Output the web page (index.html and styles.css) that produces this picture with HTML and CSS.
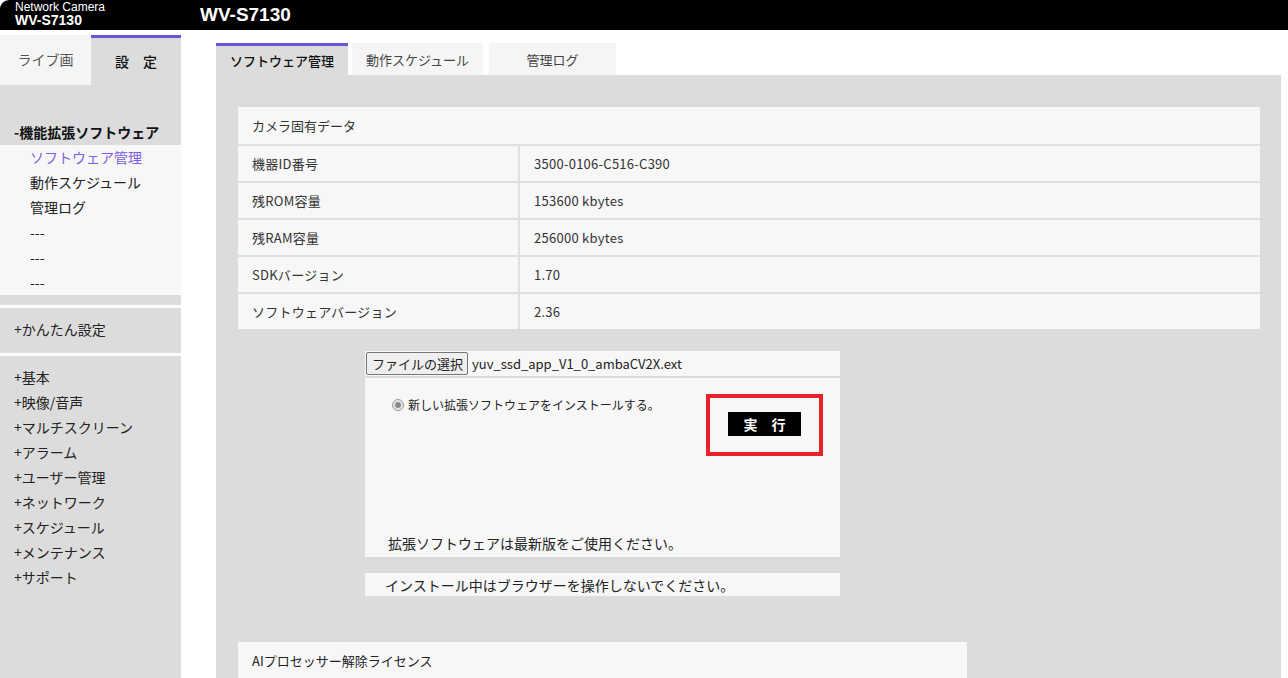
FILE: index.html
```html
<!DOCTYPE html>
<html lang="ja">
<head>
<meta charset="utf-8">
<title>WV-S7130</title>
<link rel="stylesheet" href="styles.css">
</head>
<body>
<header class="topbar">
  <div class="brand">
    <div class="brand-sub">Network Camera</div>
    <div class="brand-model">WV-S7130</div>
  </div>
  <div class="title">WV-S7130</div>
</header>
<div class="layout">
  <aside class="sidebar">
    <div class="side-tabs">
      <div class="side-tab live">ライブ画</div>
      <div class="side-tab setting">設　定</div>
    </div>
    <div class="side-block first">
      <div class="side-head">-機能拡張ソフトウェア</div>
      <ul class="sub-list">
        <li class="active">ソフトウェア管理</li>
        <li>動作スケジュール</li>
        <li>管理ログ</li>
        <li>---</li>
        <li>---</li>
        <li>---</li>
      </ul>
    </div>
    <div class="side-block second">
      <ul class="menu-list">
        <li>+かんたん設定</li>
      </ul>
    </div>
    <div class="side-block third">
      <ul class="menu-list">
        <li>+基本</li>
        <li>+映像/音声</li>
        <li>+マルチスクリーン</li>
        <li>+アラーム</li>
        <li>+ユーザー管理</li>
        <li>+ネットワーク</li>
        <li>+スケジュール</li>
        <li>+メンテナンス</li>
        <li>+サポート</li>
      </ul>
    </div>
  </aside>
  <main class="main">
    <nav class="tabs">
      <div class="tab tab-1 active">ソフトウェア管理</div>
      <div class="tab tab-2">動作スケジュール</div>
      <div class="tab tab-3">管理ログ</div>
    </nav>
    <section class="panel">
      <div class="info-table">
        <div class="cell head">カメラ固有データ</div>
        <div class="cell">機器ID番号</div><div class="cell">3500-0106-C516-C390</div>
        <div class="cell">残ROM容量</div><div class="cell">153600 kbytes</div>
        <div class="cell">残RAM容量</div><div class="cell">256000 kbytes</div>
        <div class="cell">SDKバージョン</div><div class="cell">1.70</div>
        <div class="cell">ソフトウェアバージョン</div><div class="cell">2.36</div>
      </div>
      <div class="install">
        <div class="file-row">
          <span class="file-btn">ファイルの選択</span>
          <span class="file-name">yuv_ssd_app_V1_0_ambaCV2X.ext</span>
        </div>
        <div class="install-box">
          <div class="install-top">
            <label class="radio-label"><span class="radio"></span>新しい拡張ソフトウェアをインストールする。</label>
            <div class="highlight">
              <span class="exec-btn">実　行</span>
            </div>
          </div>
          <div class="install-note">拡張ソフトウェアは最新版をご使用ください。</div>
        </div>
        <div class="warn-box">インストール中はブラウザーを操作しないでください。</div>
      </div>
      <div class="license-box">AIプロセッサー解除ライセンス</div>
    </section>
  </main>
</div>
</body>
</html>
```

FILE: styles.css
```css
html, body {
  margin: 0;
  padding: 0;
  height: 678px;
  overflow: hidden;
  background: #ffffff;
  font-family: "Noto Sans CJK JP", "Liberation Sans", sans-serif;
  color: #222;
}

.topbar {
  height: 30px;
  background: #000;
  border-top-left-radius: 9px;
  display: flex;
  align-items: center;
  color: #fff;
  font-family: "Liberation Sans", Arial, sans-serif;
}

.brand {
  width: 185px;
  padding-left: 15px;
  box-sizing: border-box;
  display: flex;
  flex-direction: column;
  margin-top: -1px;
}

.brand-sub {
  font-size: 12px;
  line-height: 12px;
}

.brand-model {
  font-size: 14px;
  font-weight: bold;
  line-height: 15px;
}

.title {
  font-size: 19px;
  font-weight: bold;
  padding-left: 15px;
  margin-top: -1px;
}

.layout {
  display: flex;
  margin-top: 5px;
  height: 643px;
}

/* Sidebar */
.sidebar {
  width: 181px;
  flex: none;
  display: flex;
  flex-direction: column;
  gap: 3px;
  font-size: 14px;
}

.side-tabs {
  display: flex;
  height: 50px;
  margin-bottom: -3px;
}

.side-tab {
  display: flex;
  align-items: center;
  justify-content: center;
  box-sizing: border-box;
}

.side-tab.live {
  width: 91px;
  background: #f5f5f5;
  color: #555;
  padding-bottom: 2px;
}

.side-tab.setting {
  width: 90px;
  background: #dcdcdc;
  border-top: 3px solid #6a55db;
  color: #111;
  font-weight: 500;
  padding-bottom: 2px;
}

.side-block {
  background: #dcdcdc;
}

.side-block.first {
  padding-top: 34px;
  padding-bottom: 10px;
}

.side-head {
  font-weight: bold;
  line-height: 26px;
  padding-left: 14px;
  color: #111;
}

.sub-list,
.menu-list {
  list-style: none;
  margin: 0;
  padding: 0;
}

.sub-list {
  background: #f7f7f7;
}

.sub-list li {
  line-height: 25px;
  padding-left: 30px;
  color: #222;
}

.sub-list li.active {
  color: #7a5fe0;
}

.menu-list li {
  line-height: 25px;
  padding-left: 14px;
  color: #222;
}

.side-block.second {
  padding: 9px 0 11px;
}

.side-block.third {
  flex: 1;
  padding-top: 9px;
}

/* Main */
.main {
  flex: 1;
  display: flex;
  flex-direction: column;
  padding: 8px 7px 0 35px;
}

.tabs {
  display: flex;
  height: 33px;
  font-size: 13px;
}

.tab {
  display: flex;
  align-items: center;
  justify-content: center;
  box-sizing: border-box;
  background: #f5f5f5;
  color: #444;
}

.tab.active {
  background: #dcdcdc;
  border-top: 3px solid #6a55db;
  color: #111;
  font-weight: 500;
  padding-bottom: 1px;
}

.tab-1 { width: 132px; }
.tab-2 { width: 131px; margin-left: 4px; }
.tab-3 { width: 127px; margin-left: 6px; }

.panel {
  flex: 1;
  background: #dcdcdc;
  padding: 32px 21px 0 22px;
  font-size: 13px;
  color: #333;
}

.info-table {
  display: grid;
  grid-template-columns: 280px 1fr;
  gap: 2px;
  background: #e0e0e0;
}

.cell {
  background: #f7f7f7;
  height: 35px;
  display: flex;
  align-items: center;
  padding-left: 14px;
  letter-spacing: 0.02em;
}

.cell.head {
  grid-column: 1 / span 2;
  height: 37px;
  letter-spacing: 0;
}

.install {
  width: 475px;
  margin: 22px 0 0 127px;
}

.file-row {
  background: #f7f7f7;
  height: 25px;
  display: flex;
  align-items: center;
  padding-left: 1px;
}

.file-btn {
  height: 23px;
  box-sizing: border-box;
  border: 1px solid #767676;
  border-radius: 2px;
  background: #efefef;
  padding: 0 4px 0 5px;
  display: flex;
  align-items: center;
  font-size: 13px;
  color: #222;
}

.file-name {
  margin-left: 4px;
  font-size: 13px;
  color: #222;
}

.install-box {
  margin-top: 2px;
  height: 179px;
  background: #f7f7f7;
  display: flex;
  flex-direction: column;
}

.install-top {
  display: flex;
  justify-content: space-between;
  align-items: flex-start;
  padding: 15px 17px 0 27px;
}

.radio-label {
  display: flex;
  align-items: center;
  font-size: 12px;
  color: #222;
  margin-top: 3px;
}

.radio {
  width: 12px;
  height: 12px;
  box-sizing: border-box;
  border: 1px solid #9a9a9a;
  border-radius: 50%;
  background: #e6e6e6;
  margin-right: 4px;
  display: flex;
  align-items: center;
  justify-content: center;
}

.radio::after {
  content: "";
  width: 6px;
  height: 6px;
  border-radius: 50%;
  background: #8a8a8a;
}

.highlight {
  width: 117px;
  height: 62px;
  box-sizing: border-box;
  border: 4px solid #e8212b;
  display: flex;
  align-items: center;
  justify-content: center;
  padding-bottom: 3px;
  margin-top: 1px;
}

.exec-btn {
  width: 73px;
  height: 24px;
  background: #000;
  color: #fff;
  font-weight: bold;
  font-size: 14px;
  display: flex;
  align-items: center;
  justify-content: center;
}

.install-note {
  margin-top: auto;
  padding: 0 0 4px 23px;
  font-size: 14px;
  line-height: 20px;
  color: #222;
}

.warn-box {
  margin-top: 16px;
  height: 23px;
  background: #f7f7f7;
  display: flex;
  align-items: center;
  padding-left: 20px;
  font-size: 14px;
  color: #222;
}

.license-box {
  margin-top: 46px;
  width: 729px;
  height: 36px;
  box-sizing: border-box;
  background: #f7f7f7;
  display: flex;
  align-items: center;
  padding: 0 0 0 14px;
  font-size: 13px;
  color: #222;
}
```
